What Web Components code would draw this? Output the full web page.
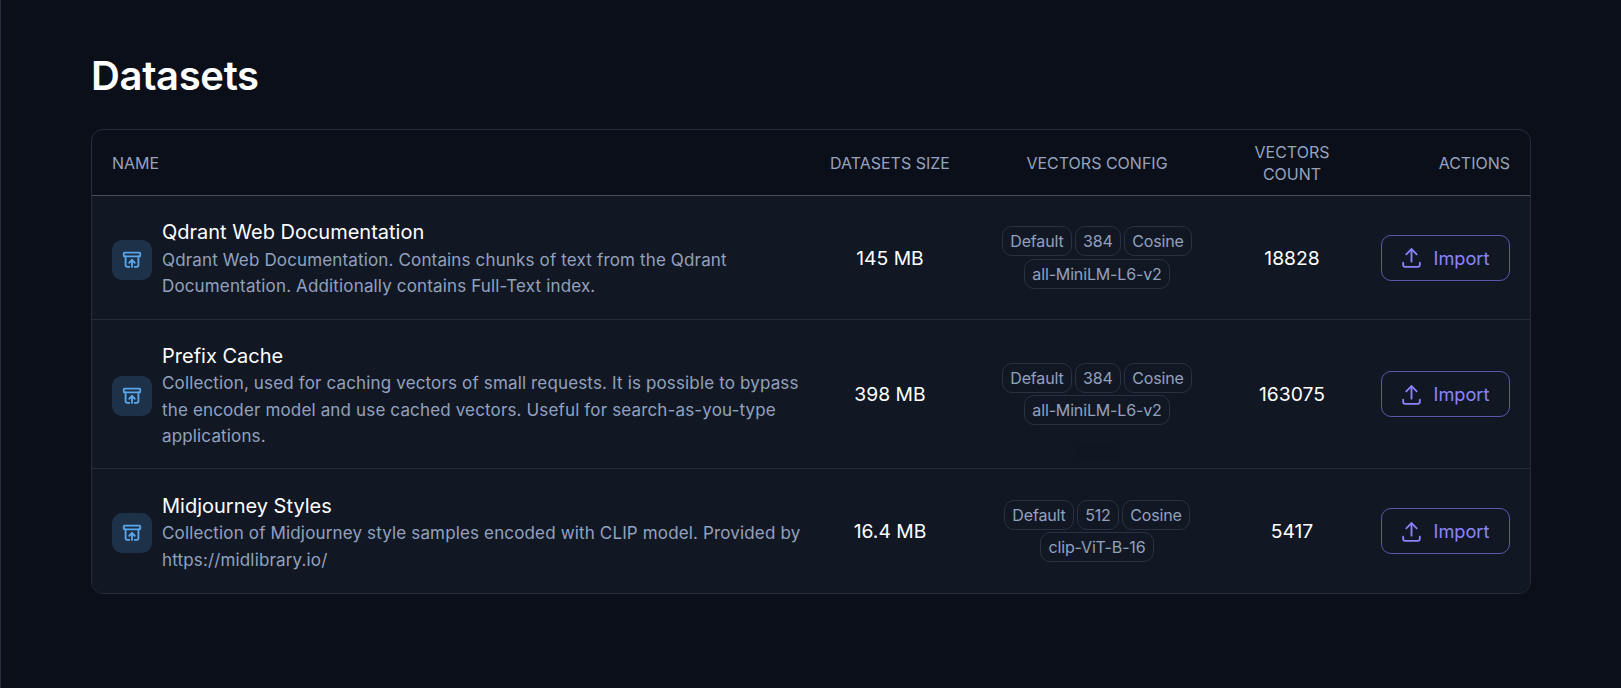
<!DOCTYPE html>
<html lang="en">
<head>
<meta charset="utf-8">
<title>Datasets</title>
<style>
    html, body {
        margin: 0;
        height: 100%;
        background-color: #0b0f19;
    }
    body {
        font-family: Inter, "Liberation Sans", sans-serif;
        color: #fff;
    }
</style>
</head>
<body>
<datasets-page>
    <dataset-table>
        <dataset-row name="Qdrant Web Documentation" size="145 MB" count="18828">
            <span slot="description">Qdrant Web Documentation. Contains chunks of text from the Qdrant Documentation. Additionally contains Full-Text index.</span>
            <vector-chip slot="config">Default</vector-chip>
            <vector-chip slot="config">384</vector-chip>
            <vector-chip slot="config">Cosine</vector-chip>
            <vector-chip slot="config">all-MiniLM-L6-v2</vector-chip>
        </dataset-row>
        <dataset-row name="Prefix Cache" size="398 MB" count="163075" tip>
            <span slot="description">Collection, used for caching vectors of small requests. It is possible to bypass the encoder model and use cached vectors. Useful for search-as-you-type applications.</span>
            <vector-chip slot="config">Default</vector-chip>
            <vector-chip slot="config">384</vector-chip>
            <vector-chip slot="config">Cosine</vector-chip>
            <vector-chip slot="config">all-MiniLM-L6-v2</vector-chip>
        </dataset-row>
        <dataset-row name="Midjourney Styles" size="16.4 MB" count="5417">
            <span slot="description">Collection of Midjourney style samples encoded with CLIP model. Provided by https://midlibrary.io/</span>
            <vector-chip slot="config">Default</vector-chip>
            <vector-chip slot="config">512</vector-chip>
            <vector-chip slot="config">Cosine</vector-chip>
            <vector-chip slot="config">clip-ViT-B-16</vector-chip>
        </dataset-row>
    </dataset-table>
</datasets-page>

<template id="page-template">
    <style>
        :host {
            display: block;
            box-sizing: border-box;
            height: 688px;
            border-left: 1px solid #262c3a;
            padding: 52px 90px 0 90px;
        }
        h1 {
            margin: 0 0 29px;
            font-size: 40px;
            line-height: 48px;
            font-weight: 600;
            letter-spacing: -0.35px;
        }
    </style>
    <h1>Datasets</h1>
    <slot></slot>
</template>

<template id="table-template">
    <style>
        :host {
            display: block;
            border: 1px solid #262c3a;
            border-radius: 12px;
            overflow: hidden;
            --cols: minmax(0, 1fr) 160px 254px 136px 170px;
        }
        .head {
            display: grid;
            grid-template-columns: var(--cols);
            align-items: center;
            height: 65px;
            border-bottom: 1px solid #4a4e5a;
            font-size: 16px;
            line-height: 22px;
            color: #96a3bf;
        }
        .head div {
            text-align: center;
            padding: 0 20px;
        }
        .head div:first-child { text-align: left; }
        .head div:last-child { text-align: right; }
    </style>
    <div class="head">
        <div>NAME</div>
        <div>DATASETS SIZE</div>
        <div>VECTORS CONFIG</div>
        <div>VECTORS<br>COUNT</div>
        <div>ACTIONS</div>
    </div>
    <slot></slot>
</template>

<template id="row-template">
    <style>
        :host {
            display: grid;
            box-sizing: border-box;
            min-height: 124px;
            grid-template-columns: var(--cols);
            align-items: center;
            background-color: #111824;
            border-bottom: 1px solid #262c3a;
        }
        :host(:last-child) {
            border-bottom: 0;
        }
        .cell {
            padding: 0 20px;
            text-align: center;
            font-size: 19.3px;
        }
        .main {
            display: flex;
            align-items: center;
            gap: 10px;
            padding: 22.5px 2px 18.5px 20px;
            text-align: left;
        }
        .badge {
            flex: none;
            width: 40px;
            height: 40px;
            border-radius: 10px;
            background-color: #1d3149;
            display: flex;
            align-items: center;
            justify-content: center;
            color: #5ba6ea;
        }
        .name {
            font-size: 20px;
            line-height: 27.5px;
            color: #fff;
        }
        .description {
            font-size: 17px;
            line-height: 26.5px;
            color: #93a1bf;
            letter-spacing: 0.15px;
        }
        .config {
            position: relative;
            display: flex;
            flex-wrap: wrap;
            justify-content: center;
            gap: 2.5px;
        }
        .tip {
            display: none;
            position: absolute;
            left: 50%;
            top: calc(100% + 18px);
            width: 44px;
            height: 17px;
            margin-left: -22px;
            border-radius: 3px;
            background-color: #101722;
        }
        :host([tip]) .tip {
            display: block;
        }
        .actions {
            display: flex;
            justify-content: flex-end;
        }
    </style>
    <div class="cell main">
        <div class="badge">
            <svg width="22" height="22" viewBox="0 0 24 24" fill="none" stroke="currentColor" stroke-width="2" stroke-linecap="round" stroke-linejoin="round">
                <rect x="3" y="4" width="18" height="4" rx="1"/>
                <path d="M5 8v9.5a2 2 0 0 0 2 2h2"/>
                <path d="M19 8v9.5a2 2 0 0 1-2 2h-2"/>
                <path d="M12 19.5v-7.5"/>
                <path d="M9 15l3-3 3 3"/>
            </svg>
        </div>
        <div>
            <div class="name"></div>
            <div class="description"><slot name="description"></slot></div>
        </div>
    </div>
    <div class="cell size"></div>
    <div class="cell config"><slot name="config"></slot><div class="tip"></div></div>
    <div class="cell count"></div>
    <div class="cell actions"><import-button></import-button></div>
</template>

<template id="chip-template">
    <style>
        :host {
            display: inline-block;
            box-sizing: border-box;
            height: 30px;
            padding: 0 7.5px;
            border: 1px solid #2a3140;
            border-radius: 10px;
            font-size: 16px;
            line-height: 28px;
            color: #93a1bf;
            letter-spacing: -0.15px;
        }
    </style>
    <slot></slot>
</template>

<template id="button-template">
    <style>
        :host {
            display: inline-flex;
            box-sizing: border-box;
            align-items: center;
            justify-content: center;
            gap: 10px;
            width: 129px;
            height: 46px;
            padding-right: 3px;
            border: 1px solid #5a58a8;
            border-radius: 10px;
            font-size: 18.2px;
            font-weight: 400;
            color: #8c84ff;
            cursor: pointer;
        }
        svg { flex: none; }
    </style>
    <svg width="25" height="25" viewBox="0 0 24 24" fill="none" stroke="currentColor" stroke-width="1.75" stroke-linecap="round" stroke-linejoin="round">
        <path d="M4 17v2a2 2 0 0 0 2 2h12a2 2 0 0 0 2-2v-2"/>
        <path d="M7 9l5-5 5 5"/>
        <path d="M12 4v12"/>
    </svg>
    <span>Import</span>
</template>

<script>
    const stamp = function(element, id) {
        const shdw = element.attachShadow({mode: 'open'});
        shdw.appendChild(document.getElementById(id).content.cloneNode(true));
        return shdw;
    }

    class DatasetsPage extends HTMLElement {
        constructor() {
            super();
            stamp(this, 'page-template');
        }
    }

    class DatasetTable extends HTMLElement {
        constructor() {
            super();
            stamp(this, 'table-template');
        }
    }

    class DatasetRow extends HTMLElement {
        constructor() {
            super();
            stamp(this, 'row-template');
        }

        connectedCallback() {
            this.shadowRoot.querySelector('.name').textContent = this.getAttribute('name');
            this.shadowRoot.querySelector('.size').textContent = this.getAttribute('size');
            this.shadowRoot.querySelector('.count').textContent = this.getAttribute('count');
        }
    }

    class VectorChip extends HTMLElement {
        constructor() {
            super();
            stamp(this, 'chip-template');
        }
    }

    class ImportButton extends HTMLElement {
        constructor() {
            super();
            stamp(this, 'button-template');
        }
    }

    customElements.define('datasets-page', DatasetsPage);
    customElements.define('dataset-table', DatasetTable);
    customElements.define('dataset-row', DatasetRow);
    customElements.define('vector-chip', VectorChip);
    customElements.define('import-button', ImportButton);
</script>
</body>
</html>
